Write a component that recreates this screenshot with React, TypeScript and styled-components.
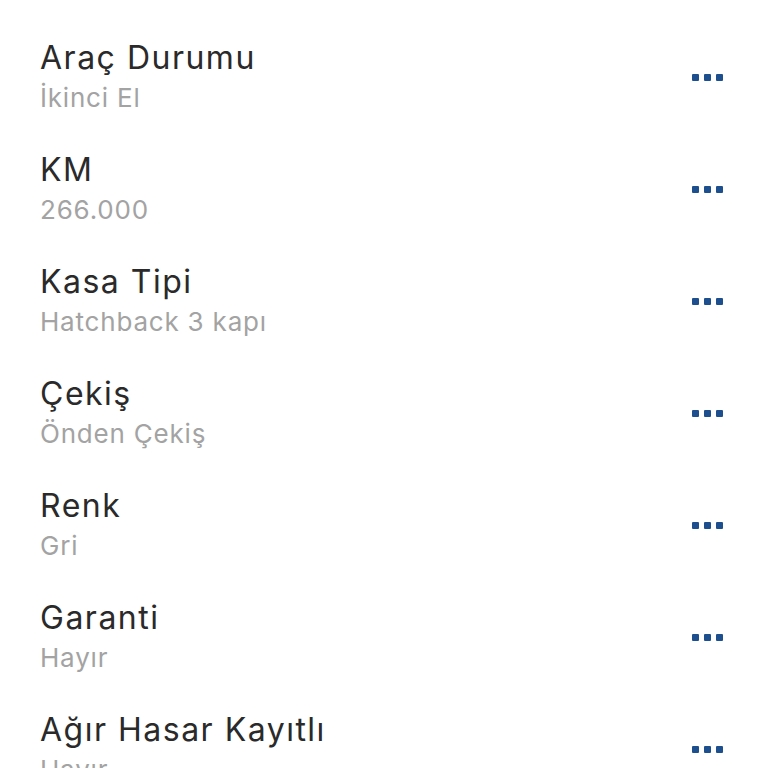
import React from 'react';
import styled, { createGlobalStyle } from 'styled-components';

interface Ozellik {
  baslik: string;
  deger: string;
}

const ozellikler: Ozellik[] = [
  { baslik: 'Araç Durumu', deger: 'İkinci El' },
  { baslik: 'KM', deger: '266.000' },
  { baslik: 'Kasa Tipi', deger: 'Hatchback 3 kapı' },
  { baslik: 'Çekiş', deger: 'Önden Çekiş' },
  { baslik: 'Renk', deger: 'Gri' },
  { baslik: 'Garanti', deger: 'Hayır' },
  { baslik: 'Ağır Hasar Kayıtlı', deger: 'Hayır' },
];

const App: React.FC = () => {
  return (
    <>
      <GlobalStyle />
      <Liste>
        {ozellikler.map((o) => (
          <Satir key={o.baslik}>
            <Metin>
              <Baslik>{o.baslik}</Baslik>
              <Deger>{o.deger}</Deger>
            </Metin>
            <Noktalar>
              <Nokta />
              <Nokta />
              <Nokta />
            </Noktalar>
          </Satir>
        ))}
      </Liste>
    </>
  );
};

export default App;

const GlobalStyle = createGlobalStyle`
  html, body {
    margin: 0;
    padding: 0;
    background: #ffffff;
    overflow: hidden;
  }
  body {
    font-family: Inter, "Noto Sans", sans-serif;
  }
`;

const Liste = styled.div`
  display: flex;
  flex-direction: column;
  padding-top: 20px;
`;

const Satir = styled.div`
  display: flex;
  align-items: center;
  justify-content: space-between;
  height: 112px;
  padding: 0 45px 0 40px;
  box-sizing: border-box;
  flex-shrink: 0;
`;

const Metin = styled.div`
  display: flex;
  flex-direction: column;
`;

const Baslik = styled.div`
  font-size: 32px;
  line-height: 40px;
  letter-spacing: 1.5px;
  color: #2a2a2a;
`;

const Deger = styled.div`
  font-size: 26px;
  line-height: 34px;
  margin-top: 3px;
  letter-spacing: 0.8px;
  color: #a3a3a3;
`;

const Noktalar = styled.div`
  display: flex;
  gap: 5px;
  margin-top: 2px;
`;

const Nokta = styled.span`
  width: 7px;
  height: 7px;
  background: #1d4f8f;
  border-radius: 1px;
`;
